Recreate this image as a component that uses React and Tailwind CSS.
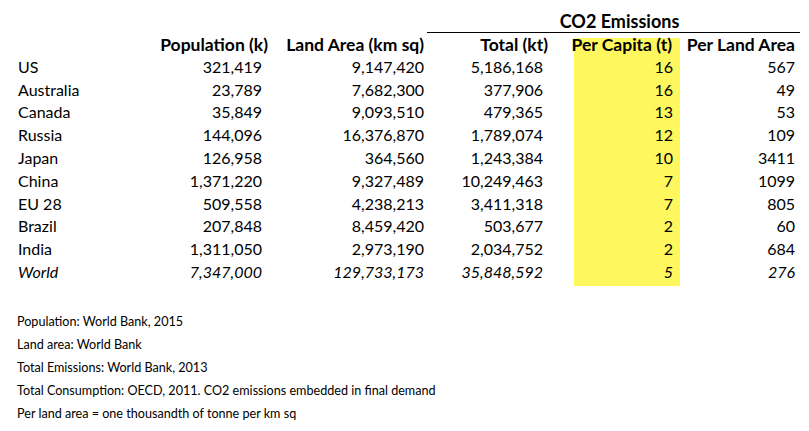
import React from 'react';

const rows = [
  ['US', '321,419', '9,147,420', '5,186,168', '16', '567'],
  ['Australia', '23,789', '7,682,300', '377,906', '16', '49'],
  ['Canada', '35,849', '9,093,510', '479,365', '13', '53'],
  ['Russia', '144,096', '16,376,870', '1,789,074', '12', '109'],
  ['Japan', '126,958', '364,560', '1,243,384', '10', '3411'],
  ['China', '1,371,220', '9,327,489', '10,249,463', '7', '1099'],
  ['EU 28', '509,558', '4,238,213', '3,411,318', '7', '805'],
  ['Brazil', '207,848', '8,459,420', '503,677', '2', '60'],
  ['India', '1,311,050', '2,973,190', '2,034,752', '2', '684'],
];

const world = ['World', '7,347,000', '129,733,173', '35,848,592', '5', '276'];

const notes = [
  'Population: World Bank, 2015',
  'Land area: World Bank',
  'Total Emissions: World Bank, 2013',
  'Total Consumption: OECD, 2011. CO2 emissions embedded in final demand',
  'Per land area = one thousandth of tonne per km sq',
];

const DataRow = ({ cells, italic }) => (
  <div className={`flex h-[22.8px] leading-[18px] text-[16px] whitespace-nowrap ${italic ? 'italic' : ''}`}>
    <div className="w-[170px] pl-[18px]">{cells[0]}</div>
    <div className="w-[98px] pr-[6px] text-right">{cells[1]}</div>
    <div className="w-[159px] pr-[3px] text-right">{cells[2]}</div>
    <div className="w-[147px] pr-[31px] text-right">{cells[3]}</div>
    <div className="w-[106px] pr-[7px] text-right bg-[#fff75e]">{cells[4]}</div>
    <div className="w-[120px] pr-[5px] text-right">{cells[5]}</div>
  </div>
);

export default function App() {
  return (
    <div className="w-[809px] h-[431px] bg-white text-black font-['Lato',sans-serif] overflow-hidden">
      <div className="flex">
        <div className="ml-[427px] w-[373px] h-[33px] pt-[14px] pl-[12px] border-b border-black text-center font-bold text-[18px] leading-[14px] whitespace-nowrap">
          CO2 Emissions
        </div>
      </div>
      <div className="mt-[5px]">
        <div className="flex h-[19.8px] leading-[14px] text-[17.5px] font-bold whitespace-nowrap">
          <div className="w-[170px]"></div>
          <div className="w-[98px] flex justify-end">Population (k)</div>
          <div className="w-[159px] pr-[3px] flex justify-end">Land Area (km sq)</div>
          <div className="w-[147px] pr-[26px] flex justify-end">Total (kt)</div>
          <div className="w-[106px] pr-[8px] flex justify-end bg-[#fff75e]">Per Capita (t)</div>
          <div className="w-[120px] pr-[5px] flex justify-end">Per Land Area</div>
        </div>
        {rows.map((r) => (
          <DataRow key={r[0]} cells={r} />
        ))}
        <DataRow cells={world} italic />
      </div>
      <div className="mt-[24px] pl-[17px] text-[12.6px] leading-[23px] whitespace-nowrap">
        {notes.map((n) => (
          <div key={n}>{n}</div>
        ))}
      </div>
    </div>
  );
}
